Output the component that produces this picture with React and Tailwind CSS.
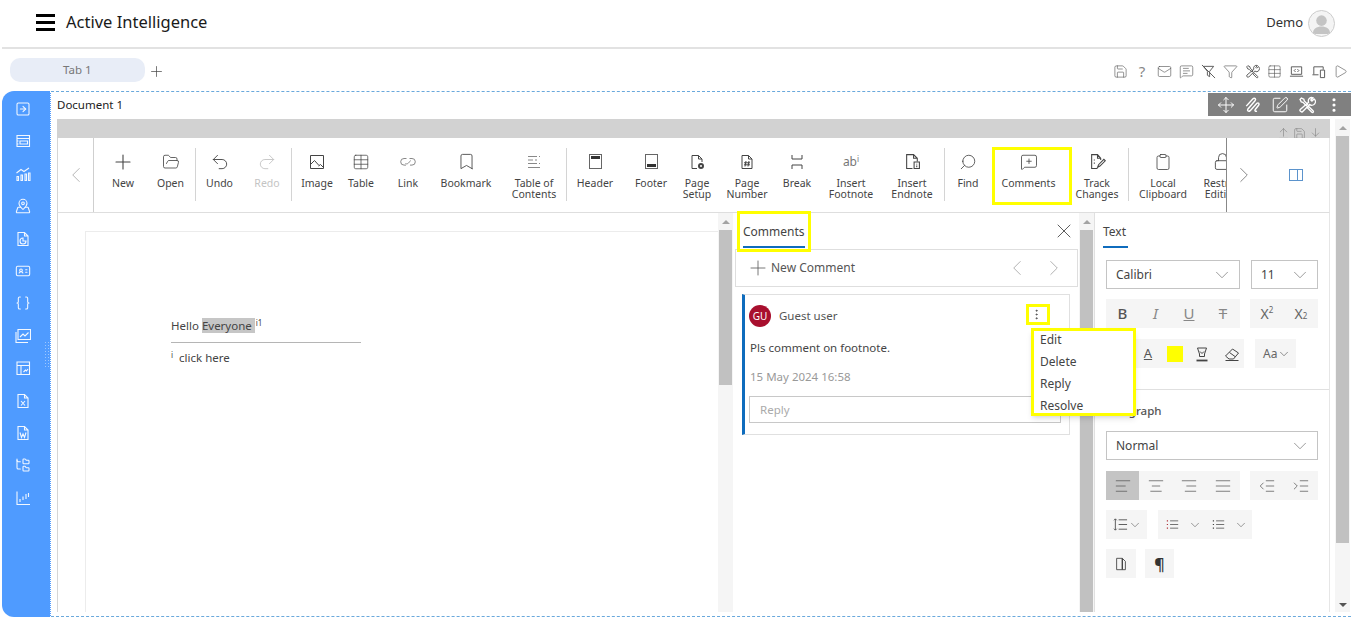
import {
  AlignCenter, AlignJustify, AlignLeft, AlignRight, ArrowDownToLine, ArrowUpFromLine, Bookmark, Braces, ChevronDown,
  ChevronLeft, ChevronRight, Clipboard, EllipsisVertical, FolderOpen, FolderTree, Funnel, IdCard,
  IndentDecrease, IndentIncrease, Lock, Mail, MapPinned, MessageSquarePlus, MessageSquareText, Move,
  Plus, Play, Redo2, Save, Search, SquareArrowRight, SquarePen, Table, Undo2, X,
} from "lucide-react";

// small wrapper for the hand drawn icons, all on a 16 grid
function Svg({ size = 16, sw = 1, className = "", children }) {
  return (
    <svg width={size} height={size} viewBox="0 0 16 16" fill="none" stroke="currentColor" strokeWidth={sw} className={className}>
      {children}
    </svg>
  );
}

const filePath = "M3 1.500h6.500L13 5v9.500H3zM9.500 1.500V5H13";

const Tools = (p) => (
  <Svg {...p}>
    <path d="M1.800 3 3 1.800l2.200 1.100.4 1.500 3 3-1.200 1.200-3-3-1.500-.4z" />
    <path d="m9.500 9.300 4 4c.7.9-.4 1.900-1.200 1.200l-4-4z" />
    <path d="M14.300 2.600 12.400 4.500l-1-1 1.900-1.900a3 3 0 0 0-3.900 3.900L2 11.900c-1 1.100.9 2.900 2 2L10.400 7.500a3 3 0 0 0 3.900-4.900z" />
  </Svg>
);
const Scribble = (p) => (
  <Svg {...p}>
    <path d="M2 9 8 2.500c1.500-1.500 3 .3 1.800 1.700L3.500 11.500c-1 1.500.5 2.800 2 1.500l6-6.500c1.200-1 2.500.5 1.500 1.700L10 12c-.8 1 .2 2 1.500 1.500" />
  </Svg>
);
const FunnelCross = (p) => (
  <Svg {...p}>
    <path d="M2.500 2.500h11l-4.300 5.300v5.700l-2.400-1.500V7.800zM1 1l14 14" />
  </Svg>
);
const LaptopCode = (p) => (
  <Svg {...p}>
    <path d="M2.500 3h11v8h-11zM1 13h14M7 5.500 5.500 7 7 8.500M9 5.500 10.500 7 9 8.500" />
  </Svg>
);
const Devices = (p) => (
  <Svg {...p}>
    <path d="M8 11.500H1.500M3 11V3h10v3M10 6.500h4.500v8H10z" />
  </Svg>
);
const ImageIcon = (p) => (
  <Svg {...p}>
    <path d="M1.500 1.500h13v13h-13zM1.500 10.500l4-4 4.500 5M9.500 12l2-1.500 3 3" />
  </Svg>
);
const LinkIcon = (p) => (
  <Svg {...p}>
    <path d="M6.500 4.500H4a3.300 3.300 0 0 0 0 6.600h2M9.500 4.500H12a3.300 3.300 0 0 1 0 6.600h-2M5.500 9.500c1.500 1 3 0 5-3" />
  </Svg>
);
const Toc = (p) => (
  <Svg {...p}>
    <path d="M2 2.500h9M13 2.500h1M2 6h5M9 6h2M2 9.500h9M13 9.500h1M2 13.500h12" />
  </Svg>
);
const FileGear = (p) => (
  <Svg {...p}>
    <path d="M8 14.500H3v-13h6.500L13 5v3M9.500 1.500V5H13" />
    <circle cx="12" cy="12" r="2" strokeWidth="2" />
  </Svg>
);
const FileHash = (p) => (
  <Svg {...p}>
    <path d={filePath} />
    <path d="M7 7 6 12.500M10 7 9 12.500M5 8.800h6M5 10.800h6" />
  </Svg>
);
const FileInfo = (p) => (
  <Svg {...p}>
    <path d="M8 14.500H2.500v-13h6.500L12.500 5v3M9 1.500V5h3.500" />
    <path d="M9.500 8.500h5v6h-5zM12 10v.8M12 11.800v1.500" />
  </Svg>
);
const FileTrack = (p) => (
  <Svg {...p}>
    <path d="M11 6.500V5L8 1.500H2.500v13H8M8 1.500V5h3M5 6v1M5 9v1" />
    <path d="M8 13.500 9 11l5-5 1.300 1.300-5 5z" />
  </Svg>
);
const Break = (p) => (
  <Svg {...p}>
    <path d="M3 1v4h10V1M3 15v-4h10v4" />
  </Svg>
);
const PanelCard = (p) => (
  <Svg {...p}>
    <path d="M2 2.500h12.500v11H2zM2 5.500h12.500M5 8h7.500v3H5zM2 8h1.500M2 11h1.500" />
  </Svg>
);
const ChartBars = (p) => (
  <Svg {...p}>
    <path d="M1.500 7 6 3.500l3 2 5-3.500" />
    <path d="M2 10.500h1.500v4H2zM6 9h1.500v5.500H6zM10 8h1.500v6.500H10zM13.500 7H15v7.500h-1.500z" />
  </Svg>
);
const FilePie = (p) => (
  <Svg {...p}>
    <path d={filePath} />
    <path d="M8 7a3 3 0 1 0 3 3H8z" />
  </Svg>
);
const ImageChart = (p) => (
  <Svg {...p}>
    <path d="M3 1.500h12.500v10H3zM1 4v10.500h12" />
    <path d="m5 9 3-3 2 2 3.500-3.500" />
  </Svg>
);
const TableChart = (p) => (
  <Svg {...p}>
    <path d="M2 2h12.500v12.500H2zM2 5.500h12.500M6 5.500v9M8.500 12l2-2 1 1 1.500-2" />
  </Svg>
);
const FileX = (p) => (
  <Svg {...p}>
    <path d={filePath} />
    <path d="m6 8 4 4.500M10 8l-4 4.500" />
  </Svg>
);
const FileW = (p) => (
  <Svg {...p}>
    <path d={filePath} />
    <path d="m5 7.500 1.500 5L8 9l1.500 3.500L11 7.500" />
  </Svg>
);
const StockChart = (p) => (
  <Svg {...p}>
    <path d="M2 1.500v13h13M5 9v3M8 6.500V10M11 4v5M13.500 3v4" strokeWidth="1.100" />
  </Svg>
);
const Highlight = (p) => (
  <Svg {...p}>
    <path d="M3.500 2h9l-2 6v2.500h-5V8zM6 5.500l2 2 2-2" />
    <path d="M2.500 14.500h11" strokeWidth="1.800" />
  </Svg>
);
const Eraser2 = (p) => (
  <Svg {...p}>
    <path d="M1.500 10 8.500 3l6 4-5 6H5zM5.500 6.500l5.500 4M1.500 14.500h13" />
  </Svg>
);
const LineSpace = (p) => (
  <Svg {...p}>
    <path d="M6 3h9M6 8h9M6 13h9M2.500 2v12M1 3.500 2.500 2 4 3.500M1 12.500 2.500 14 4 12.500" />
  </Svg>
);
const Bullets = ({ num, ...p }) => (
  <Svg {...p}>
    <path d="M5 3.500h10M5 8h10M5 12.500h10" />
    <path d="M1 3.500h2M1 8h2M1 12.500h2" stroke={num ? "#444" : "#b0333a"} strokeWidth="1.400" strokeDasharray="1.500 .5" />
  </Svg>
);
const PageDoc = (p) => (
  <Svg {...p}>
    <path d="M3 1.500h6.500L13 5v9.500H3z" />
    <path d="M9.500 1.500V14.500" strokeWidth="1.600" />
  </Svg>
);

const topIcons = [Save, null, Mail, MessageSquareText, FunnelCross, Funnel, Tools, Table, LaptopCode, Devices, Play];
const sideIcons = [
  SquareArrowRight, PanelCard, ChartBars, MapPinned, FilePie, IdCard, Braces, ImageChart, TableChart, FileX, FileW, FolderTree, StockChart,
];

// width classes are tuned to land each button on its spot in the ribbon
const ribbon = [
  { w: "w-[46px]", icon: Plus, size: 24, label: ["New"], tight: true },
  { w: "w-[49px]", icon: FolderOpen, size: 18, label: ["Open"] },
  { sep: true },
  { w: "w-[47px]", icon: Undo2, size: 20, label: ["Undo"] },
  { w: "w-[48px]", icon: Redo2, size: 20, label: ["Redo"], muted: true },
  { sep: true },
  { w: "w-[50px]", own: ImageIcon, label: ["Image"] },
  { w: "w-[38px]", own: Table, size: 18, label: ["Table"] },
  { w: "w-[56px]", own: LinkIcon, label: ["Link"], light: true },
  { w: "w-[60px]", icon: Bookmark, size: 19, label: ["Bookmark"] },
  { w: "w-[64px] ml-[6px]", own: Toc, label: ["Table of", "Contents"], light: true },
  { sep: true },
  { w: "w-[56px]", box: "top", label: ["Header"] },
  { w: "w-[56px]", box: "bottom", label: ["Footer"] },
  { w: "w-[36px]", own: FileGear, label: ["Page", "Setup"] },
  { w: "w-[64px]", own: FileHash, label: ["Page", "Number"] },
  { w: "w-[36px]", own: Break, label: ["Break"] },
  { w: "w-[72px]", ab: true, label: ["Insert", "Footnote"] },
  { w: "w-[50px] mr-[7px]", own: FileInfo, size: 17, label: ["Insert", "Endnote"] },
  { sep: true },
  { w: "w-[46px]", icon: Search, size: 18, flip: true, label: ["Find"] },
  { w: "w-[75px]", icon: MessageSquarePlus, size: 18, label: ["Comments"], mark: true },
  { w: "w-[62px]", own: FileTrack, size: 17, label: ["Track", "Changes"] },
  { sep: true },
  { w: "w-[68px]", icon: Clipboard, size: 18, label: ["Local", "Clipboard"] },
  { w: "w-[50px]", icon: Lock, size: 19, label: ["Restrict", "Editing"] },
];

function RibbonItem({ item }) {
  if (item.sep) return <div className="w-px h-[53px] mt-[10px] bg-[#d4d4d4] shrink-0" />;
  const Icon = item.icon;
  const Own = item.own;
  return (
    <div className={`${item.w} relative shrink-0 flex flex-col items-center pt-[14px] text-[10.5px] leading-[11px] ${item.muted ? "text-[#c4c4c4]" : "text-[#444]"}`}>
      <div className={`h-[19px] mb-[7px] flex items-center justify-center ${item.light ? "text-[#888]" : ""}`}>
        {Icon && <Icon size={item.size || 18} strokeWidth={1.1} className={`shrink-0 ${item.flip ? "-scale-x-100" : ""}`} />}
        {Own && <Own size={item.size || 16} strokeWidth={1} />}
        {item.box === "top" && (
          <div className="w-[13px] h-[15px] border border-[#666] p-px"><div className="h-[3px] bg-[#333]" /></div>
        )}
        {item.box === "bottom" && (
          <div className="w-[13px] h-[15px] border border-[#666] p-px flex items-end"><div className="h-[3px] w-full bg-[#333]" /></div>
        )}
        {item.ab && <span className="text-[12px] text-[#777]">ab<sup className="text-[8px]">i</sup></span>}
      </div>
      {item.label.map((line) => (
        <span key={line} className="whitespace-nowrap">{line}</span>
      ))}
      {item.mark && (
        <div className="absolute left-px top-[9px] w-[80px] h-[58px] border-[3px] border-[#ffff00]" />
      )}
    </div>
  );
}

function Scroll({ thumb, className = "", down = false }) {
  return (
    <div className={`w-[15px] shrink-0 bg-[#f5f5f5] flex flex-col items-center relative ${className}`}>
      <div className="h-[17px] shrink-0 flex items-center justify-center">
        <div className="w-0 h-0 border-x-[4px] border-x-transparent border-b-[4px] border-b-[#a3a3a3]" />
      </div>
      <div className={`w-[13px] bg-[#c1c1c1] ${thumb}`} />
      {down && (
        <div className="absolute bottom-[5px] w-0 h-0 border-x-[4px] border-x-transparent border-t-[4px] border-t-[#555]" />
      )}
    </div>
  );
}

function ToolGroup({ className = "", children }) {
  return <div className={`h-[29px] bg-[#f5f5f5] flex items-center shrink-0 ${className}`}>{children}</div>;
}

function Btn({ className = "", children }) {
  return <div className={`h-full flex items-center justify-center text-[#555] ${className}`}>{children}</div>;
}

function SelectBox({ value, className = "" }) {
  return (
    <div className={`h-[29px] border border-[#c4c4c4] flex items-center justify-between pl-[9px] pr-[6px] text-[12px] text-[#444] shrink-0 ${className}`}>
      <span>{value}</span>
      <ChevronDown size={22} strokeWidth={0.8} className="text-[#777]" />
    </div>
  );
}

export default function App() {
  return (
    <div className="w-[1353px] h-[619px] overflow-hidden bg-white text-[#333] font-['Noto_Sans','Open_Sans',sans-serif]">
      {/* header */}
      <div className="h-[49px] mx-[2px] border-b-2 border-[#e2e2e2] flex items-center pl-[34px] pr-[16px]">
        <div className="w-[19px] flex flex-col gap-[4px] -mt-[2px]">
          <div className="h-[3px] bg-black" />
          <div className="h-[3px] bg-black" />
          <div className="h-[3px] bg-black" />
        </div>
        <span className="ml-[11px] text-[16.500px] text-[#1a1a1a] -mt-[2px]">Active Intelligence</span>
        <span className="ml-auto text-[13px] text-[#333] -mt-[1px]">Demo</span>
        <div className="ml-[5px] w-[27px] h-[27px] rounded-full border border-[#ccc] bg-[#f4f4f4] overflow-hidden">
          <svg viewBox="0 0 26 26" width="25" height="25">
            <circle cx="13" cy="10" r="5.500" fill="#c4c4c4" />
            <path d="M4 24c0-6 4-8 9-8s9 2 9 8z" fill="#c4c4c4" />
          </svg>
        </div>
      </div>

      {/* tab row */}
      <div className="h-[42px] flex items-center pl-[10px] pr-[2px]">
        <div className="w-[135px] h-[24px] rounded-[10px] bg-[#e8edf7] text-[11.5px] text-[#777] pl-[53px] flex items-center">Tab 1</div>
        <Plus size={17} strokeWidth={1} className="ml-[3px] mt-[2px] text-[#444]" />
        <div className="ml-auto flex items-center mt-[2px]">
          {topIcons.map((Icon, i) => (
            <div key={i} className="w-[22px] h-[16px] flex items-center justify-center text-[#555]">
              {Icon ? <Icon size={15} strokeWidth={1} /> : <span className="text-[15px] leading-[16px] text-[#888]">?</span>}
            </div>
          ))}
        </div>
      </div>

      {/* main */}
      <div className="h-[526px] flex pl-[2px] pr-[2px]">
        <div className="w-[49px] shrink-0 bg-[#4f9bff] rounded-l-[12px] relative border-r border-dotted border-white pt-[10px] flex flex-col items-center gap-[16.400px] pr-[6px] text-[#f2f7ff]">
          {sideIcons.map((Icon, i) => (
            <Icon key={i} size={16} strokeWidth={1.6} sw={1.1} className="shrink-0" />
          ))}
          <div className="absolute left-[42px] top-[250px] w-[7px] h-[28px] bg-[radial-gradient(#9cc6ff_1px,transparent_1px)] bg-[length:3px_3px]" />
        </div>

        <div className="flex-1 min-w-0 relative border-t border-b border-dashed border-[#6aa9dc] border-l-0 pl-[6px] flex flex-col pb-[4px]">
          <div className="h-[27px] pt-[5px] text-[11.5px] leading-[16px] text-[#222]">Document 1</div>
          <div className="flex-1 min-h-0 flex">
            <div className="w-[1273px] shrink-0 flex flex-col">
              <div className="h-[19px] bg-[#d2d2d2] flex items-start justify-end gap-[3px] pt-[8px] pr-[8px] overflow-hidden text-[#777]">
                <ArrowUpFromLine size={13} strokeWidth={1} />
                <Save size={13} strokeWidth={1} />
                <ArrowDownToLine size={13} strokeWidth={1} />
              </div>

              {/* ribbon */}
              <div className="h-[75px] shrink-0 border-b border-[#dedede] border-l border-l-[#d6d6d6] border-r border-r-[#e6e6e6] flex">
                <div className="w-[36px] shrink-0 border-r border-[#cfcfcf] flex items-center justify-center">
                  <ChevronLeft size={26} strokeWidth={0.8} className="text-[#aaa]" />
                </div>
                <div className="w-[1132px] shrink-0 flex pl-[6px] overflow-hidden relative">
                  {ribbon.map((item, i) => (
                    <RibbonItem key={i} item={item} />
                  ))}
                </div>
                <div className="flex-1 border-l border-[#888] flex items-center">
                  <ChevronRight size={26} strokeWidth={0.8} className="ml-[4px] text-[#777]" />
                  <div className="ml-[32px] w-[14px] h-[12px] border border-[#5b93cc] flex justify-end">
                    <div className="w-[5px] border-l border-[#5b93cc]" />
                  </div>
                </div>
              </div>

              <div className="flex-1 min-h-0 flex border-l border-[#d6d6d6] border-r border-r-[#e6e6e6]">
                {/* document */}
                <div className="w-[660px] shrink-0 pl-[27px] pt-[18px] overflow-hidden">
                  <div className="w-[640px] h-[420px] border-t border-l border-[#ececec] pl-[85px] pt-[85px] text-[#444]">
                    <div className="w-[190px] border-b border-[#b5b5b5] h-[26px] text-[11.5px] leading-[17px]">
                      Hello <span className="bg-[#c6c6c6]">Everyone </span>
                      <sup className="text-[8px] ml-px">i1</sup>
                    </div>
                    <div className="mt-[6px] text-[11.5px] leading-[17px]">
                      <sup className="text-[8px] mr-[6px]">i</sup>click here
                    </div>
                  </div>
                </div>

                <Scroll thumb="h-[155px]" />

                {/* comments */}
                <div className="w-[346px] shrink-0 flex flex-col pl-[2px] pr-[1px]">
                  <div className="h-[36px] shrink-0 flex items-start relative">
                    <div className="ml-[8px] mt-[10px] text-[12px] leading-[17px] text-[#444] h-[25px] border-b-2 border-[#0f6cbd]">Comments</div>
                    <div className="absolute left-[2px] -top-[2px] w-[74px] h-[41px] border-[3px] border-[#ffff00]" />
                    <X size={24} strokeWidth={0.8} className="absolute right-[2px] top-[6px] text-[#333]" />
                  </div>
                  <div className="h-[38px] shrink-0 border border-[#dedede] flex items-center pl-[10px] pr-[10px] text-[12px] text-[#555]">
                    <Plus size={24} strokeWidth={0.8} />
                    <span className="ml-[1px]">New Comment</span>
                    <ChevronLeft size={26} strokeWidth={0.7} className="ml-auto text-[#999]" />
                    <ChevronRight size={26} strokeWidth={0.7} className="ml-[11px] text-[#999]" />
                  </div>
                  <div className="ml-[7px] mt-[7px] w-[328px] h-[141px] border border-[#e0e0e0] border-l-[3px] border-l-[#0f6cbd] relative pl-[4px] pr-[8px] pt-[10px]">
                    <div className="flex items-center h-[22px]">
                      <div className="w-[22px] h-[22px] rounded-full bg-[#a80f2e] text-white text-[10px] flex items-center justify-center">GU</div>
                      <span className="ml-[8px] text-[11.5px] text-[#555]">Guest user</span>
                    </div>
                    <div className="mt-[12px] pl-px text-[11.5px] leading-[17px] text-[#444]">Pls comment on footnote.</div>
                    <div className="mt-[12px] pl-px text-[11.5px] leading-[17px] text-[#999]">15 May 2024 16:58</div>
                    <div className="mt-[11px] h-[27px] border border-[#c8c8c8] pl-[10px] flex items-center text-[11.5px] text-[#aaa]">Reply</div>

                    <div className="absolute left-[281px] top-[9px] w-[24px] h-[21px] border-[3px] border-[#ffff00] flex items-center justify-center text-[#444] pr-[3px]">
                      <EllipsisVertical size={13} strokeWidth={1.5} />
                    </div>
                    <div className="absolute left-[286px] top-[33px] w-[105px] h-[88px] z-10 bg-white border-[3px] border-[#ffff00] shadow-md pl-[6px] text-[12px] text-[#444] flex flex-col">
                      <span className="leading-[22px] h-[22px] -mt-[2px]">Edit</span>
                      <span className="leading-[22px] h-[22px]">Delete</span>
                      <span className="leading-[22px] h-[22px]">Reply</span>
                      <span className="leading-[21px] h-[21px]">Resolve</span>
                    </div>
                  </div>
                </div>

                <Scroll thumb="h-[382px]" />

                {/* text + paragraph options */}
                <div className="flex-1 min-w-0 border-l border-[#e0e0e0] flex flex-col text-[12px] text-[#444]">
                  <div className="ml-[8px] mt-[10px] w-[25px] h-[25px] border-b-2 border-[#0f6cbd] leading-[17px]">Text</div>
                  <div className="pl-[11px] pr-[11px] mt-[12px] flex justify-between">
                    <SelectBox value="Calibri" className="w-[134px]" />
                    <SelectBox value="11" className="w-[67px]" />
                  </div>
                  <div className="pl-[11px] pr-[11px] mt-[10px] flex justify-between">
                    <ToolGroup className="w-[134px]">
                      <Btn className="w-[33px] text-[15px] font-medium">B</Btn>
                      <Btn className="w-[33px] text-[15px] italic text-[#888]">I</Btn>
                      <Btn className="w-[34px] text-[15px] underline text-[#888]">U</Btn>
                      <Btn className="w-[34px] text-[15px] line-through text-[#888]">T</Btn>
                    </ToolGroup>
                    <ToolGroup className="w-[68px]">
                      <Btn className="w-[34px] text-[14px] text-[#666]">X<sup className="text-[8px]">2</sup></Btn>
                      <Btn className="w-[34px] text-[14px] text-[#666]">X<sub className="text-[8px]">2</sub></Btn>
                    </ToolGroup>
                  </div>
                  <div className="pl-[11px] mt-[11px] flex">
                    <ToolGroup className="w-[138px] pl-[29px]">
                      <Btn className="w-[26px] text-[13px] underline">A</Btn>
                      <div className="ml-[6px] w-[16px] h-[16px] bg-[#ffff00]" />
                      <Highlight size={16} className="ml-[11px] text-[#444]" />
                      <Eraser2 size={16} className="ml-[14px] text-[#444]" />
                    </ToolGroup>
                    <ToolGroup className="ml-[11px] w-[41px] pl-[8px]">
                      <span className="text-[12px] text-[#666]">Aa</span>
                      <ChevronDown size={14} strokeWidth={1} />
                    </ToolGroup>
                  </div>
                  <div className="h-px bg-[#e0e0e0] mt-[21px]" />
                  <div className="mt-[12px] pl-[9px] h-[17px] leading-[17px] text-[11.500px] font-medium text-[#555]">Paragraph</div>
                  <div className="pl-[11px] pr-[11px] mt-[12px]">
                    <SelectBox value="Normal" className="w-full" />
                  </div>
                  <div className="pl-[11px] pr-[11px] mt-[11px] flex justify-between">
                    <ToolGroup className="w-[134px]">
                      <Btn className="w-[33px] bg-[#c4c4c4] text-[#333]"><AlignLeft size={18} strokeWidth={1} /></Btn>
                      <Btn className="w-[33px] text-[#333]"><AlignCenter size={18} strokeWidth={1} /></Btn>
                      <Btn className="w-[34px] text-[#333]"><AlignRight size={18} strokeWidth={1} /></Btn>
                      <Btn className="w-[34px] text-[#333]"><AlignJustify size={18} strokeWidth={1} /></Btn>
                    </ToolGroup>
                    <ToolGroup className="w-[68px]">
                      <Btn className="w-[34px] text-[#333]"><IndentDecrease size={18} strokeWidth={1} /></Btn>
                      <Btn className="w-[34px] text-[#333]"><IndentIncrease size={18} strokeWidth={1} /></Btn>
                    </ToolGroup>
                  </div>
                  <div className="pl-[11px] mt-[10px] flex gap-[11px]">
                    <ToolGroup className="w-[41px] pl-[7px] text-[#555]">
                      <LineSpace size={15} />
                      <ChevronDown size={14} strokeWidth={1} />
                    </ToolGroup>
                    <ToolGroup className="w-[94px] pl-[8px] text-[#555]">
                      <Bullets size={13} />
                      <ChevronDown size={14} strokeWidth={1} className="ml-[9px]" />
                      <Bullets num size={13} className="ml-[10px]" />
                      <ChevronDown size={14} strokeWidth={1} className="ml-[9px]" />
                    </ToolGroup>
                  </div>
                  <div className="pl-[11px] mt-[10px] flex gap-[9px]">
                    <ToolGroup className="w-[30px] justify-center"><PageDoc size={14} className="text-[#444]" /></ToolGroup>
                    <ToolGroup className="w-[29px] justify-center text-[16px] font-semibold text-[#333]">¶</ToolGroup>
                  </div>
                </div>
              </div>
            </div>

            {/* outer scrollbar */}
            <Scroll thumb="h-[407px]" down className="ml-[5px]" />
          </div>

          {/* widget toolbar over the top right corner */}
          <div className="absolute right-0 top-[1px] w-[143px] h-[23px] bg-[#808080] text-white flex items-center pl-[9px] gap-[9px]">
            <Move size={18} strokeWidth={1.3} />
            <Scribble size={18} sw={1.3} />
            <SquarePen size={18} strokeWidth={1.3} />
            <Tools size={18} sw={1.2} />
            <EllipsisVertical size={18} strokeWidth={2.2} />
          </div>
        </div>
      </div>
    </div>
  );
}
